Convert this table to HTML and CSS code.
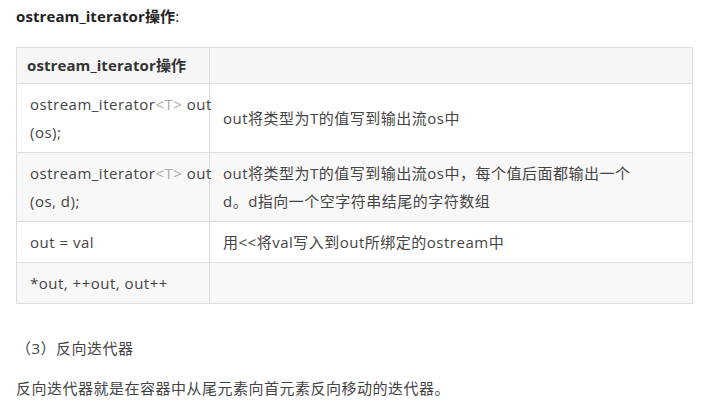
FILE: index.html
```html
<!DOCTYPE html>
<html lang="zh-CN">
<head>
    <meta charset="UTF-8">
    <title>ostream_iterator操作</title>
    <link rel="stylesheet" href="styles.css">
</head>
<body>
    <div class="article">
        <p class="title"><strong>ostream_iterator操作</strong>:</p>

        <table class="ops">
            <colgroup>
                <col class="col-first">
                <col>
            </colgroup>
            <thead>
                <tr>
                    <th>ostream_iterator操作</th>
                    <th></th>
                </tr>
            </thead>
            <tbody>
                <tr>
                    <td class="op">ostream_iterator<span class="tpl">&lt;T&gt;</span> out<br>(os);</td>
                    <td>out将类型为T的值写到输出流os中</td>
                </tr>
                <tr class="alt">
                    <td class="op">ostream_iterator<span class="tpl">&lt;T&gt;</span> out<br>(os, d);</td>
                    <td>out将类型为T的值写到输出流os中，每个值后面都输出一个<br>d。d指向一个空字符串结尾的字符数组</td>
                </tr>
                <tr>
                    <td class="op">out = val</td>
                    <td>用&lt;&lt;将val写入到out所绑定的ostream中</td>
                </tr>
                <tr class="alt">
                    <td class="op">*out, ++out, out++</td>
                    <td></td>
                </tr>
            </tbody>
        </table>

        <p class="section">（3）反向迭代器</p>
        <p>反向迭代器就是在容器中从尾元素向首元素反向移动的迭代器。</p>
    </div>
</body>
</html>
```

FILE: styles.css
```css
body {
    margin: 0;
    background: #fff;
    font-family: 'Open Sans', 'Noto Sans CJK SC', sans-serif;
    font-size: 15px;
    letter-spacing: 0.5px;
    color: #444;
}
.article {
    padding: 2px 9px 0 16px;
}
p {
    margin: 0;
    line-height: 28px;
}
.title {
    color: #222;
    margin-bottom: 17px;
}
.title strong,
.ops th {
    font-weight: 700;
    letter-spacing: 0.1px;
}
.ops {
    width: 100%;
    table-layout: fixed;
    border-collapse: collapse;
    border: 1px solid #ddd;
}
.col-first {
    width: 193px;
}
.ops th,
.ops td {
    border: 1px solid #ddd;
    text-align: left;
    vertical-align: middle;
    line-height: 28px;
}
.ops th {
    background-color: #f6f6f6;
    color: #333;
    padding: 3px 10px 4px;
}
.ops td {
    padding: 6px 13px;
}
.ops td.op {
    padding-right: 0;
    white-space: nowrap;
}
.ops tr.alt td {
    background-color: #f8f8f8;
}
.tpl {
    color: #aaa;
}
.section {
    margin-top: 30px;
    margin-bottom: 12px;
}
```
